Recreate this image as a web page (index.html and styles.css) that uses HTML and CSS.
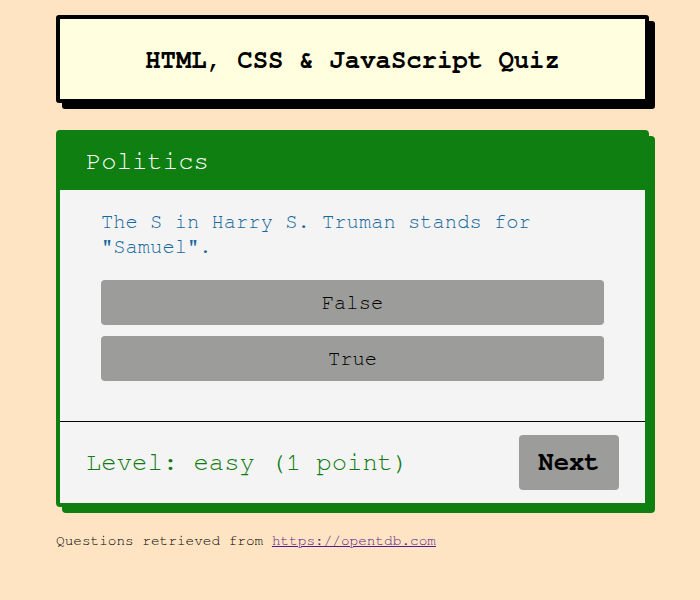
FILE: index.html
```html
<!DOCTYPE html>
<html>
<head>
<meta charset="utf-8">
<link rel="stylesheet" href="styles.css">
</head>
<body>
<main class="page">
  <header class="title-box">
    <h1 class="title">HTML, CSS &amp; JavaScript Quiz</h1>
  </header>
  <section class="card">
    <div class="card-head">Politics</div>
    <div class="card-body">
      <p class="question">The S in Harry S. Truman stands for "Samuel".</p>
      <div class="answers">
        <button class="answer">False</button>
        <button class="answer">True</button>
      </div>
    </div>
    <div class="card-foot">
      <span class="level">Level: easy (1 point)</span>
      <button class="next">Next</button>
    </div>
  </section>
  <p class="credit">Questions retrieved from <a href="https://opentdb.com" class="credit-link">https://opentdb.com</a></p>
</main>
</body>
</html>
```

FILE: styles.css
```css
html, body {
  margin: 0;
  padding: 0;
}
body {
  background: #ffe4c4;
  font-family: "Nimbus Mono PS", "Nimbus Mono L", "FreeMono", "Courier", "Liberation Mono", monospace;
  font-size: 16px;
}
.page {
  width: 593px;
  margin-left: 56px;
  padding-top: 15px;
}
.title-box {
  box-sizing: border-box;
  height: 88px;
  background: #ffffe0;
  border: 4px solid #000;
  border-radius: 3px;
  box-shadow: 6px 6px 0 #000;
  display: flex;
  align-items: center;
  justify-content: center;
}
.title {
  margin: 0;
  font-size: 25.6px;
  font-weight: bold;
  color: #000;
  padding-top: 2px;
}
.card {
  margin-top: 27px;
  border: 4px solid #107f12;
  border-radius: 4px;
  box-shadow: 6px 6px 0 #107f12;
  background: #f4f4f4;
}
.card-head {
  background: #107f12;
  color: #fff;
  font-size: 25.6px;
  height: 56px;
  line-height: 56px;
  padding-left: 26px;
}
.card-body {
  padding: 20px 41px 40px;
}
.question {
  margin: 0 0 20px;
  color: #16679b;
  font-size: 20.48px;
  line-height: 25px;
}
.answers {
  display: flex;
  flex-direction: column;
  gap: 11px;
}
.answer {
  font-family: inherit;
  font-size: 20.48px;
  line-height: 23px;
  padding: 12px 0 10px;
  border: none;
  border-radius: 4px;
  background: #9c9d9a;
  color: #000;
  width: 100%;
}
.card-foot {
  border-top: 1px solid #000;
  display: flex;
  justify-content: space-between;
  align-items: center;
  padding: 13px 26px 13px 26px;
}
.level {
  color: #0e7a10;
  font-size: 25.6px;
}
.next {
  font-family: inherit;
  font-size: 25.6px;
  font-weight: bold;
  width: 100px;
  height: 55px;
  border: none;
  border-radius: 4px;
  background: #9c9d9a;
  color: #000;
  padding: 0;
}
.credit {
  margin: 26px 0 0;
  font-size: 14.4px;
  color: #000;
}
.credit-link {
  color: #551a8b;
}
```
